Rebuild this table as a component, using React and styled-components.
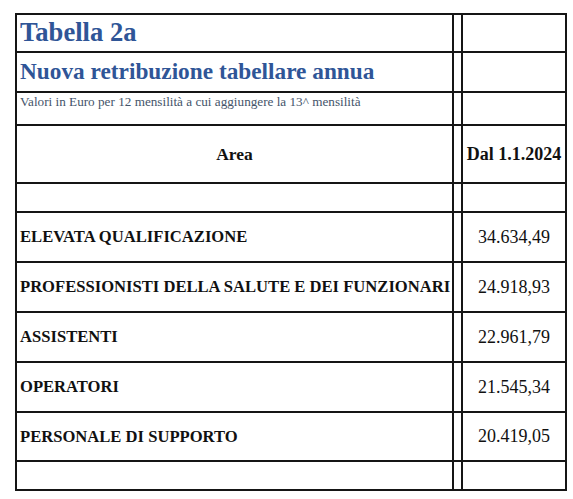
import React from 'react'
import styled, { createGlobalStyle } from 'styled-components'

const Global = createGlobalStyle`
  body {
    margin: 0;
    background: #fff;
    font-family: "Liberation Serif", "Times New Roman", serif;
  }
`

const Page = styled.div`
  padding: 13px 0 0 15px;
`

const Table = styled.table`
  border-collapse: collapse;
  table-layout: fixed;
  width: 550px;
  color: #111;
  font-family: "Liberation Serif", "Times New Roman", serif;
`

const Row = styled.tr`
  height: ${p => p.h}px;
`

const Cell = styled.td`
  border: 2px solid #151515;
  padding: 0 3px;
  vertical-align: ${p => p.top ? 'top' : 'middle'};
  text-align: ${p => p.center ? 'center' : 'left'};
  white-space: nowrap;
  overflow: visible;
`

const Title = styled.div`
  color: #2f5597;
  font-weight: bold;
  font-size: ${p => p.size}px;
  line-height: 1.1;
`

const Note = styled.div`
  color: #44546a;
  font-size: 13.2px;
  padding-top: 1px;
`

const Head = styled.span`
  font-weight: bold;
  font-size: ${p => p.size}px;
`

const Label = styled.span`
  font-weight: bold;
  font-size: 16.6px;
`

const Amount = styled.span`
  font-size: 18px;
`

const rows = [
  ['ELEVATA QUALIFICAZIONE', '34.634,49'],
  ['PROFESSIONISTI DELLA SALUTE E DEI FUNZIONARI', '24.918,93'],
  ['ASSISTENTI', '22.961,79'],
  ['OPERATORI', '21.545,34'],
  ['PERSONALE DI SUPPORTO', '20.419,05'],
]

export default function App() {
  return (
    <Page>
      <Global />
      <Table>
        <colgroup>
          <col style={{ width: 437 }} />
          <col style={{ width: 9 }} />
          <col style={{ width: 104 }} />
        </colgroup>
        <tbody>
          <Row h={38}>
            <Cell><Title size={26.6}>Tabella 2a</Title></Cell>
            <Cell />
            <Cell />
          </Row>
          <Row h={40}>
            <Cell><Title size={23.3}>Nuova retribuzione tabellare annua</Title></Cell>
            <Cell />
            <Cell />
          </Row>
          <Row h={33}>
            <Cell top><Note>Valori in Euro per 12 mensilità a cui aggiungere la 13^ mensilità</Note></Cell>
            <Cell />
            <Cell />
          </Row>
          <Row h={58}>
            <Cell center><Head size={17.5}>Area</Head></Cell>
            <Cell />
            <Cell center><Head size={18}>Dal 1.1.2024</Head></Cell>
          </Row>
          <Row h={29}>
            <Cell />
            <Cell />
            <Cell />
          </Row>
          {rows.map(([name, value], i) => (
            <Row h={i === rows.length - 1 ? 49 : 50} key={name}>
              <Cell><Label>{name}</Label></Cell>
              <Cell />
              <Cell center><Amount>{value}</Amount></Cell>
            </Row>
          ))}
          <Row h={29}>
            <Cell />
            <Cell />
            <Cell />
          </Row>
        </tbody>
      </Table>
    </Page>
  )
}
